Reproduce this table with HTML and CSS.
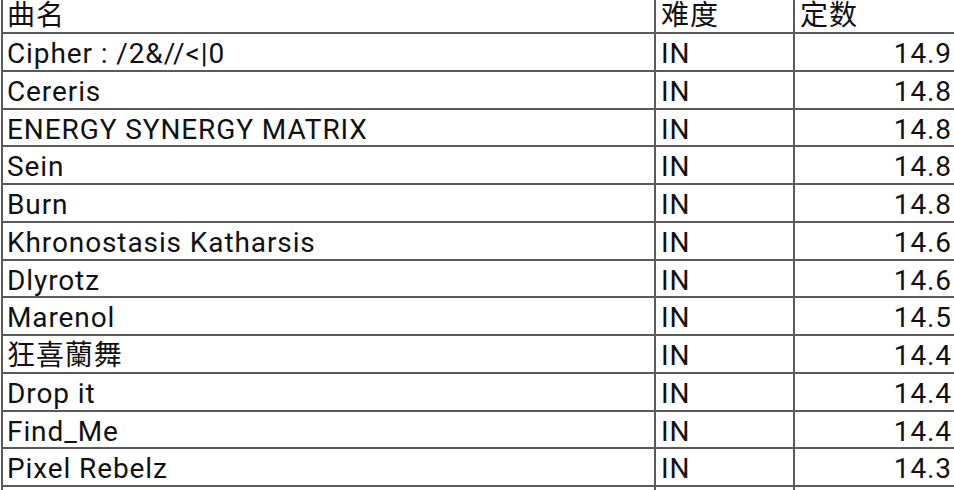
FILE: index.html
```html
<!DOCTYPE html>
<html lang="zh-CN">
<head>
<meta charset="utf-8">
<title>定数表</title>
<link rel="stylesheet" href="styles.css">
</head>
<body>
<div class="sheet">
  <div class="cell head first">曲名</div><div class="cell head">难度</div><div class="cell head last">定数</div>
  <div class="cell first">Cipher : /2&amp;//&lt;|0</div><div class="cell">IN</div><div class="cell num last">14.9</div>
  <div class="cell first">Cereris</div><div class="cell">IN</div><div class="cell num last">14.8</div>
  <div class="cell first">ENERGY SYNERGY MATRIX</div><div class="cell">IN</div><div class="cell num last">14.8</div>
  <div class="cell first">Sein</div><div class="cell">IN</div><div class="cell num last">14.8</div>
  <div class="cell first">Burn</div><div class="cell">IN</div><div class="cell num last">14.8</div>
  <div class="cell first">Khronostasis Katharsis</div><div class="cell">IN</div><div class="cell num last">14.6</div>
  <div class="cell first">Dlyrotz</div><div class="cell">IN</div><div class="cell num last">14.6</div>
  <div class="cell first">Marenol</div><div class="cell">IN</div><div class="cell num last">14.5</div>
  <div class="cell first">狂喜蘭舞</div><div class="cell">IN</div><div class="cell num last">14.4</div>
  <div class="cell first">Drop it</div><div class="cell">IN</div><div class="cell num last">14.4</div>
  <div class="cell first">Find_Me</div><div class="cell">IN</div><div class="cell num last">14.4</div>
  <div class="cell first">Pixel Rebelz</div><div class="cell">IN</div><div class="cell num last">14.3</div>
  <div class="cell first blank"></div><div class="cell blank"></div><div class="cell blank last"></div>
</div>
</body>
</html>
```

FILE: styles.css
```css
html, body {
  margin: 0;
  padding: 0;
  background: #ffffff;
}

body {
  overflow: hidden;
  width: 954px;
  height: 490px;
}

.sheet {
  display: grid;
  grid-template-columns: 655px 139px 1fr;
  grid-template-rows: 34px repeat(12, 37.75px) 1fr;
  width: 954px;
  height: 490px;
  overflow: hidden;
  padding-left: 1px;
  box-sizing: border-box;
  font-family: Roboto, "Noto Sans CJK SC", sans-serif;
  font-size: 28px;
  letter-spacing: 0.9px;
  color: #111111;
}

.cell {
  border-right: 2px solid #5a5a5a;
  border-bottom: 2px solid #5a5a5a;
  padding: 4px 4px 0 5px;
  line-height: 31px;
  white-space: nowrap;
  overflow: hidden;
}

.cell.first {
  border-left: 2px solid #5a5a5a;
  padding-left: 4px;
}

.cell.head {
  line-height: 32px;
  padding-top: 0;
}

.cell.last {
  border-right: none;
}

.num {
  text-align: right;
  padding-right: 2px;
}

.blank {
  border-bottom: none;
}
```
